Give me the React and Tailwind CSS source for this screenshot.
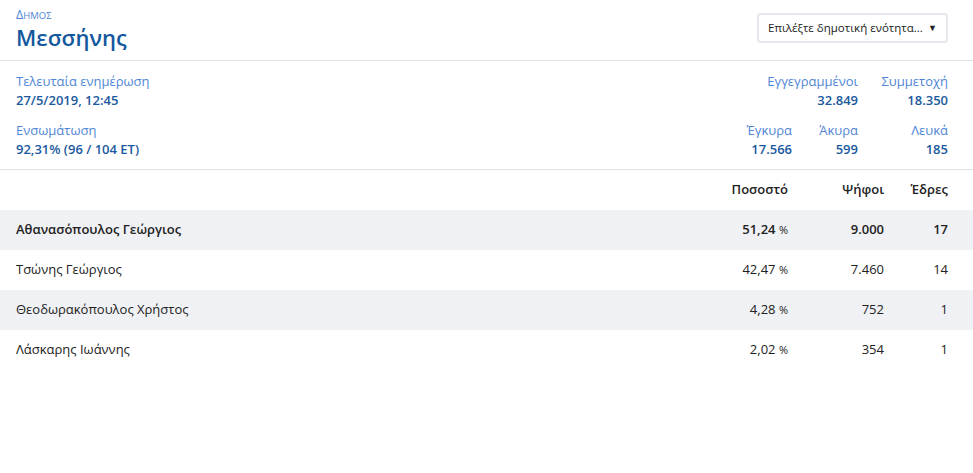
import { useState } from "react";

const ROWS = [
  { name: "Αθανασόπουλος Γεώργιος", pct: "51,24", votes: "9.000", seats: "17", lead: true },
  { name: "Τσώνης Γεώργιος", pct: "42,47", votes: "7.460", seats: "14" },
  { name: "Θεοδωρακόπουλος Χρήστος", pct: "4,28", votes: "752", seats: "1" },
  { name: "Λάσκαρης Ιωάννης", pct: "2,02", votes: "354", seats: "1" },
];

function Stat({ label, value, className = "" }) {
  return (
    <div className={`flex flex-col items-end ${className}`}>
      <span className="text-[13px] leading-[19px] text-[#4f86d6]">{label}</span>
      <span className="text-[13px] leading-[19px] font-semibold text-[#1b5a9e]">{value}</span>
    </div>
  );
}

export default function App() {
  const [unit, setUnit] = useState("");

  return (
    <div
      className="w-[973px] h-[473px] bg-white text-[#222]"
      style={{ fontFamily: '"Open Sans", "Noto Sans", sans-serif' }}
    >
      {/* Header */}
      <header className="flex items-start justify-between px-4 pt-[7px] h-[61px] border-b border-[#dfe3ea]">
        <div>
          <div className="text-[12.5px] leading-[15px] text-[#4f86d6]">
            Δ<span className="text-[9.5px]">ΗΜΟΣ</span>
          </div>
          <h1 className="text-[22px] leading-[28px] font-semibold text-[#14589e]">Μεσσήνης</h1>
        </div>
        <button
          onClick={() => setUnit(unit)}
          className="mt-[6px] mr-[9px] w-[191px] h-[30px] flex items-center justify-between px-[9px] rounded border-2 border-[#e4e7ec] bg-white text-[11.5px] text-[#222] whitespace-nowrap"
        >
          <span>Επιλέξτε δημοτική ενότητα...</span>
          <span className="text-[9px]">▼</span>
        </button>
      </header>

      {/* Info */}
      <section className="flex justify-between px-4 pt-[11px] h-[109px] border-b border-[#dfe3ea]">
        <div className="flex flex-col gap-[11px]">
          <div className="flex flex-col">
            <span className="text-[13px] leading-[19px] text-[#4f86d6]">Τελευταία ενημέρωση</span>
            <span className="text-[13px] leading-[19px] font-semibold text-[#1b5a9e]">27/5/2019, 12:45</span>
          </div>
          <div className="flex flex-col">
            <span className="text-[13px] leading-[19px] text-[#4f86d6]">Ενσωμάτωση</span>
            <span className="text-[13px] leading-[19px] font-semibold text-[#1b5a9e]">92,31% (96 / 104 ΕΤ)</span>
          </div>
        </div>
        <div className="flex flex-col gap-[11px] pr-[9px]">
          <div className="flex justify-end">
            <Stat label="Εγγεγραμμένοι" value="32.849" />
            <Stat label="Συμμετοχή" value="18.350" className="w-[90px]" />
          </div>
          <div className="flex justify-end">
            <Stat label="Έγκυρα" value="17.566" />
            <Stat label="Άκυρα" value="599" className="w-[66px]" />
            <Stat label="Λευκά" value="185" className="w-[90px]" />
          </div>
        </div>
      </section>

      {/* Results */}
      <table className="w-full border-collapse text-[13px]">
        <thead>
          <tr className="h-[40px]">
            <th className="pl-4 text-left font-normal"></th>
            <th className="text-right font-semibold">Ποσοστό</th>
            <th className="w-[96px] text-right font-semibold">Ψήφοι</th>
            <th className="w-[89px] pr-[25px] text-right font-semibold">Έδρες</th>
          </tr>
        </thead>
        <tbody>
          {ROWS.map((r, i) => (
            <tr key={r.name} className={`h-[40px] ${i % 2 === 0 ? "bg-[#f0f1f4]" : "bg-white"} ${r.lead ? "font-semibold" : ""}`}>
              <td className="pl-4 text-left">{r.name}</td>
              <td className="text-right">
                {r.pct} <span className="text-[11px] font-normal">%</span>
              </td>
              <td className="text-right">{r.votes}</td>
              <td className="pr-[25px] text-right">{r.seats}</td>
            </tr>
          ))}
        </tbody>
      </table>
    </div>
  );
}
